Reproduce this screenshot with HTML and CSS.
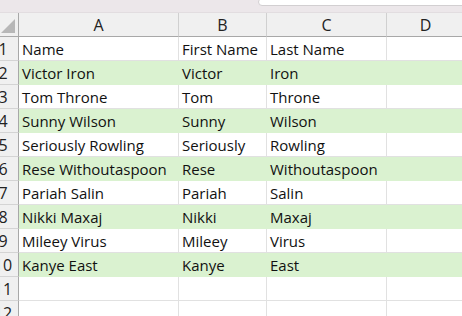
FILE: index.html
```html
<!DOCTYPE html>
<html lang="en">
<head>
    <meta charset="UTF-8">
    <meta name="viewport" content="width=device-width, initial-scale=1.0">
    <title>Sheet1</title>
    <link rel="stylesheet" href="styles.css">
</head>
<body>

    <div class="topbar">
        <div class="namebox"></div>
    </div>

    <div class="sheet">
        <div class="corner"><span class="tri"></span></div>
        <div class="colhead">A</div>
        <div class="colhead">B</div>
        <div class="colhead">C</div>
        <div class="colhead">D</div>

        <div class="rowhead"><span>1</span></div>
        <div class="cell">Name</div>
        <div class="cell">First Name</div>
        <div class="cell">Last Name</div>
        <div class="cell"></div>

        <div class="rowhead"><span>2</span></div>
        <div class="cell fill">Victor Iron</div>
        <div class="cell fill">Victor</div>
        <div class="cell fill">Iron</div>
        <div class="cell fill"></div>

        <div class="rowhead"><span>3</span></div>
        <div class="cell">Tom Throne</div>
        <div class="cell">Tom</div>
        <div class="cell">Throne</div>
        <div class="cell"></div>

        <div class="rowhead"><span>4</span></div>
        <div class="cell fill">Sunny Wilson</div>
        <div class="cell fill">Sunny</div>
        <div class="cell fill">Wilson</div>
        <div class="cell fill"></div>

        <div class="rowhead"><span>5</span></div>
        <div class="cell">Seriously Rowling</div>
        <div class="cell">Seriously</div>
        <div class="cell">Rowling</div>
        <div class="cell"></div>

        <div class="rowhead"><span>6</span></div>
        <div class="cell fill">Rese Withoutaspoon</div>
        <div class="cell fill">Rese</div>
        <div class="cell fill">Withoutaspoon</div>
        <div class="cell fill"></div>

        <div class="rowhead"><span>7</span></div>
        <div class="cell">Pariah Salin</div>
        <div class="cell">Pariah</div>
        <div class="cell">Salin</div>
        <div class="cell"></div>

        <div class="rowhead"><span>8</span></div>
        <div class="cell fill">Nikki Maxaj</div>
        <div class="cell fill">Nikki</div>
        <div class="cell fill">Maxaj</div>
        <div class="cell fill"></div>

        <div class="rowhead"><span>9</span></div>
        <div class="cell">Mileey Virus</div>
        <div class="cell">Mileey</div>
        <div class="cell">Virus</div>
        <div class="cell"></div>

        <div class="rowhead"><span>10</span></div>
        <div class="cell fill">Kanye East</div>
        <div class="cell fill">Kanye</div>
        <div class="cell fill">East</div>
        <div class="cell fill"></div>

        <div class="rowhead"><span>11</span></div>
        <div class="cell"></div>
        <div class="cell"></div>
        <div class="cell"></div>
        <div class="cell"></div>

        <div class="rowhead"><span>12</span></div>
        <div class="cell"></div>
        <div class="cell"></div>
        <div class="cell"></div>
        <div class="cell"></div>
    </div>

</body>
</html>
```

FILE: styles.css
```css
body, div, span {
  margin: 0;
  padding: 0;
}

body {
  width: 462px;
  height: 316px;
  overflow: hidden;
  background: #fff;
  font-family: "Open Sans", "Liberation Sans", sans-serif;
  color: #111;
}

.topbar {
  height: 13px;
  background: #ece7ea;
  display: flex;
  justify-content: flex-end;
  box-sizing: border-box;
  border-bottom: 1px solid #e2dde0;
}

.namebox {
  width: 210px;
  height: 6px;
  margin-top: -2px;
  margin-right: -8px;
  background: #fff;
  border: 1px solid #d2cfd1;
  border-radius: 5px;
}

.sheet {
  display: grid;
  grid-template-columns: 19px 160px 88px 120px 78px;
  grid-auto-rows: 24px;
}

.corner,
.colhead,
.rowhead {
  box-sizing: border-box;
  background: #f0f0f0;
}

.corner {
  position: relative;
  border-right: 1px solid #a8a8a8;
  border-bottom: 1px solid #a8a8a8;
}

.corner .tri {
  position: absolute;
  right: 3px;
  bottom: 3px;
  width: 0;
  height: 0;
  border-left: 14px solid transparent;
  border-bottom: 14px solid #b7b7b7;
}

.colhead {
  border-right: 1px solid #d0d0d0;
  border-bottom: 1px solid #a8a8a8;
  display: flex;
  align-items: center;
  justify-content: center;
  padding-top: 1px;
  font-size: 16px;
  color: #222;
}

/* the row numbers sit in a header that is scrolled partly out of view */
.rowhead {
  border-right: 1px solid #a8a8a8;
  border-bottom: 1px solid #d4d4d4;
  overflow: hidden;
  display: flex;
  align-items: center;
  padding-top: 1px;
}

.rowhead span {
  flex: none;
  width: 30px;
  margin-left: -12px;
  text-align: center;
  font-size: 16px;
  color: #222;
}

.cell {
  box-sizing: border-box;
  border-right: 1px solid #e1e1e1;
  border-bottom: 1px solid #e1e1e1;
  padding-left: 3px;
  padding-top: 1px;
  display: flex;
  align-items: center;
  font-size: 15px;
  white-space: nowrap;
}

.cell.fill {
  background: #daf2d0;
  border-color: #daf2d0;
}
```
